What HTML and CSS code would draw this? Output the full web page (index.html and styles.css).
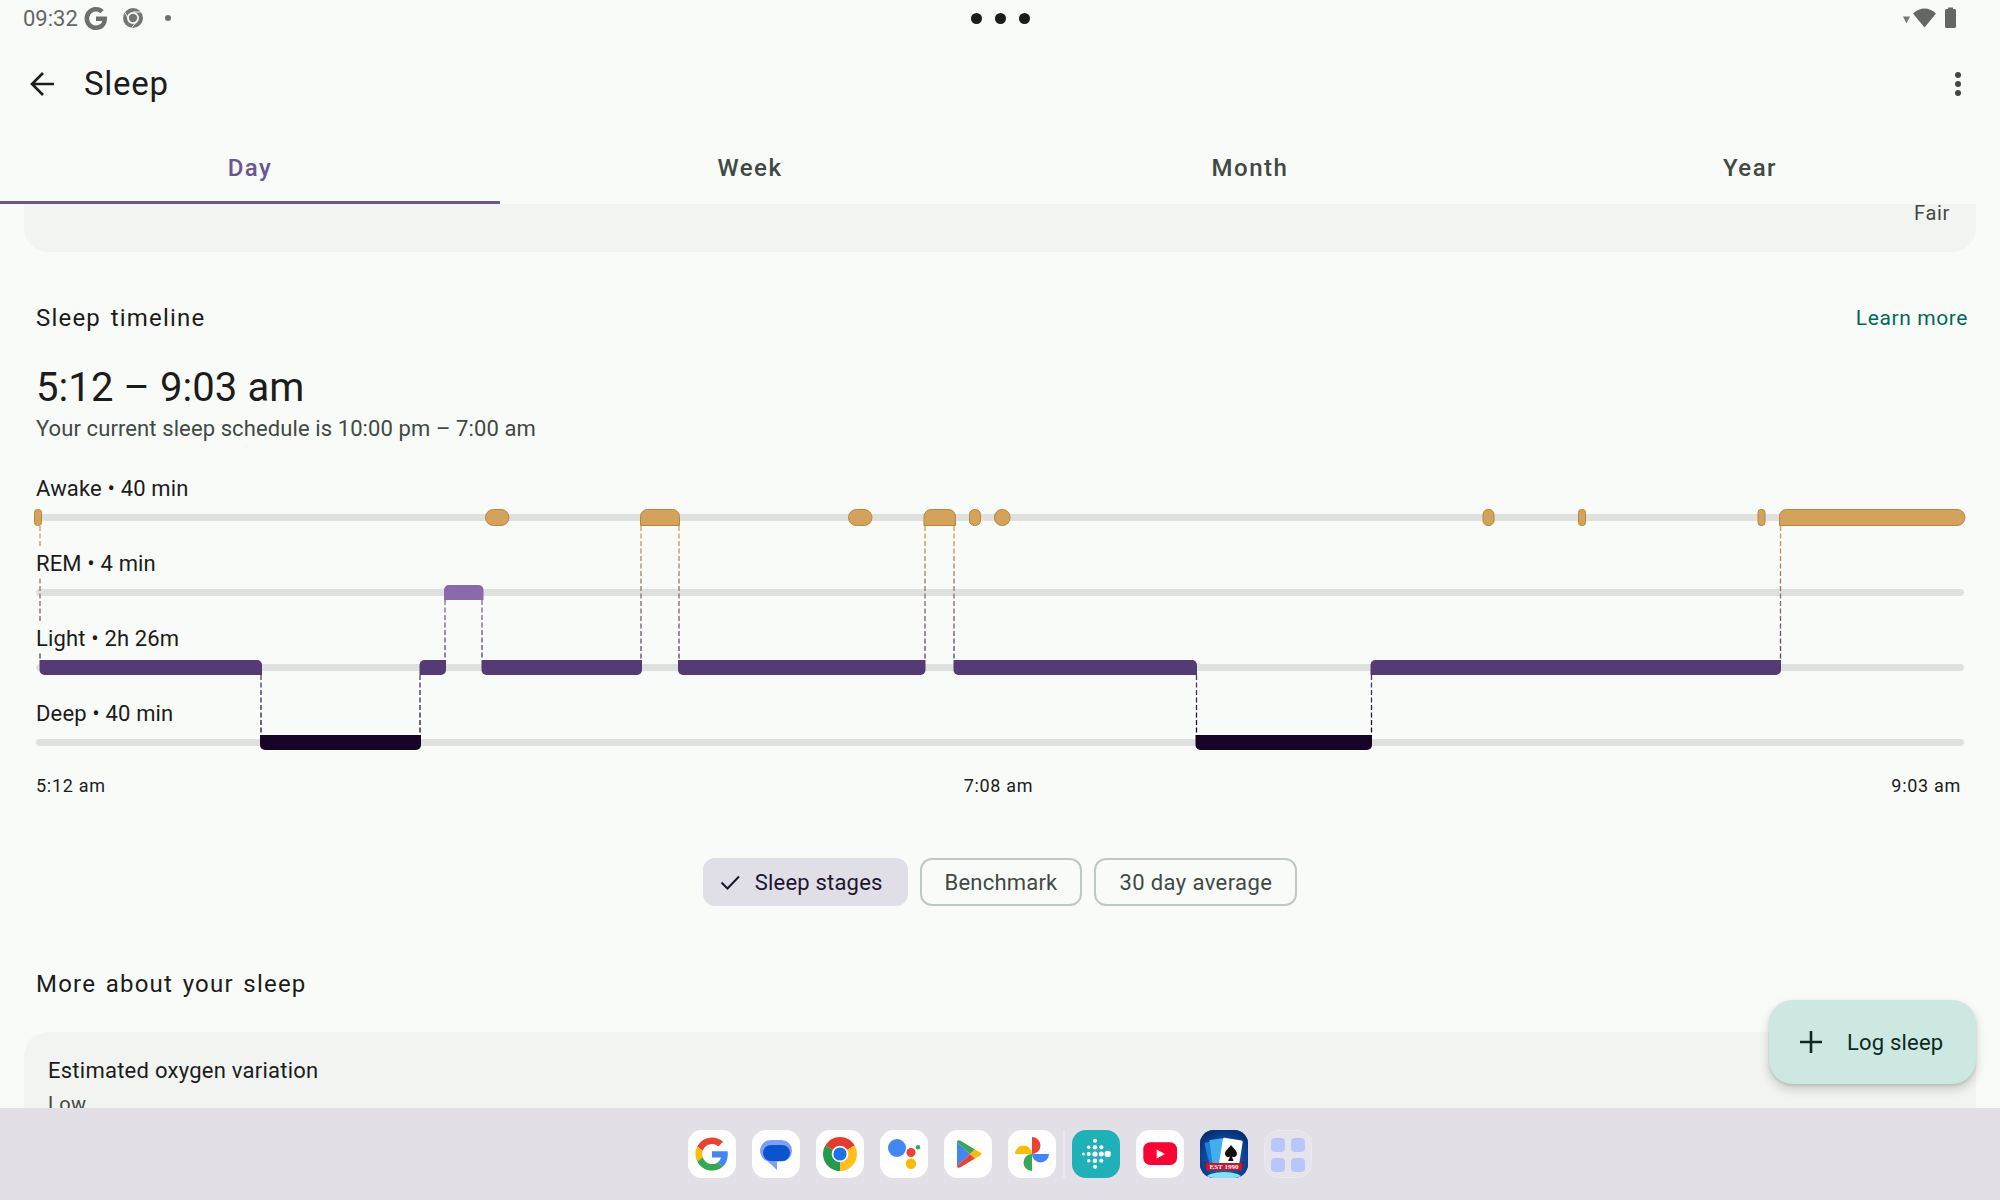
FILE: index.html
```html
<!DOCTYPE html>
<html lang="en">
<head>
<meta charset="utf-8">
<title>Sleep</title>
<link rel="stylesheet" href="styles.css">
</head>
<body>
<div class="screen">
  <div class="status">
    <div class="status-left">
      <span class="clock">09:32</span>
      <svg class="st-g" viewBox="0 0 48 48"><path d="M24 9.5c3.54 0 6.71 1.22 9.21 3.6l6.85-6.85C35.9 2.38 30.47 0 24 0 14.62 0 6.51 5.38 2.56 13.22l7.98 6.19C12.43 13.72 17.74 9.5 24 9.5zM46.98 24.55c0-1.57-.15-3.09-.38-4.55H24v9.02h12.94c-.58 2.96-2.26 5.48-4.78 7.18l7.73 6c4.51-4.18 7.09-10.36 7.09-17.65zM10.53 28.59c-.48-1.45-.76-2.99-.76-4.59s.27-3.14.76-4.59l-7.98-6.19C.92 16.46 0 20.12 0 24c0 3.88.92 7.54 2.56 10.78l7.97-6.19zM24 48c6.48 0 11.93-2.13 15.89-5.81l-7.73-6c-2.15 1.45-4.92 2.3-8.16 2.3-6.26 0-11.57-4.22-13.47-9.91l-7.98 6.19C6.51 42.62 14.62 48 24 48z"/></svg>
      <svg class="st-chrome" viewBox="0 0 20 20"><circle cx="10" cy="10" r="10" fill="#757575"/><circle cx="10" cy="10" r="6" fill="#f9fbf8"/><circle cx="10" cy="10" r="4.2" fill="#757575"/><path d="M10 4H19M6 12L2 4.5M14 12.5L9 19.5" stroke="#f9fbf8" stroke-width="1"/></svg>
      <span class="st-dot"></span>
    </div>
    <div class="status-center"><span></span><span></span><span></span></div>
    <div class="status-right">
      <svg class="st-icons" viewBox="0 0 56 22"><path d="M0 9.5H7L3.5 16.5Z" fill="#777"/><path d="M10 6.5Q21.500 -3.500 33 6.500L21.500 20.500Z" fill="#666"/><path d="M42 3.500a1.500 1.500 0 0 1 1.500 -1.500H45V0.500H50V2H51.500a1.500 1.500 0 0 1 1.500 1.500V19.500a1.500 1.500 0 0 1 -1.500 1.500H43.500a1.500 1.500 0 0 1 -1.500 -1.500Z" fill="#666"/></svg>
    </div>
  </div>

  <header class="topbar">
    <svg class="back" viewBox="0 0 36 36"><path d="M29 18H7M18 7L7 18L18 29" fill="none" stroke="#1b1c1b" stroke-width="2.600"/></svg>
    <h1 class="title">Sleep</h1>
    <svg class="more" viewBox="0 0 8 26"><circle cx="4" cy="4" r="3"/><circle cx="4" cy="13" r="3"/><circle cx="4" cy="22" r="3"/></svg>
  </header>

  <nav class="tabs">
    <div class="tab tab-active">Day</div>
    <div class="tab">Week</div>
    <div class="tab">Month</div>
    <div class="tab">Year</div>
  </nav>

  <main class="content">
    <div class="card-end"><span class="fair">Fair</span></div>

    <section class="timeline">
      <div class="sec-head">
        <h2 class="sec-title">Sleep timeline</h2>
        <a class="learn">Learn more</a>
      </div>
      <div class="range">5:12 – 9:03 am</div>
      <div class="schedule">Your current sleep schedule is 10:00 pm – 7:00 am</div>

      <div class="chart">
        <div class="row"><div class="row-label">Awake • 40 min</div><div class="track"></div></div>
        <div class="row"><div class="row-label">REM • 4 min</div><div class="track"></div></div>
        <div class="row"><div class="row-label">Light • 2h 26m</div><div class="track"></div></div>
        <div class="row"><div class="row-label">Deep • 40 min</div><div class="track"></div></div>

        <svg class="bars" viewBox="0 0 2000 300">
          <defs>
            <linearGradient id="gA" gradientUnits="userSpaceOnUse" x1="0" y1="52" x2="0" y2="187"><stop offset="0" stop-color="#d4a25a"/><stop offset="1" stop-color="#553b75"/></linearGradient>
            <linearGradient id="gR" gradientUnits="userSpaceOnUse" x1="0" y1="127" x2="0" y2="187"><stop offset="0" stop-color="#8a69aa"/><stop offset="1" stop-color="#553b75"/></linearGradient>
            <linearGradient id="gD" gradientUnits="userSpaceOnUse" x1="0" y1="202" x2="0" y2="262"><stop offset="0" stop-color="#553b75"/><stop offset="1" stop-color="#170528"/></linearGradient>
          </defs>
          <g class="dash dash-a">
            <path d="M40 53V187M641 53V187M679 53V187M925 53V187M954 53V187M1780.500 53V187"/>
          </g>
          <g class="dash dash-r"><path d="M445 127V187M482 127V187"/></g>
          <g class="dash dash-d"><path d="M261 202V262M420 202V262M1196.500 202V262M1371.500 202V262"/></g>

          <g class="awake">
            <rect x="34.500" y="36.500" width="7" height="16" rx="3"/>
            <rect x="485.500" y="36.500" width="23.500" height="16" rx="8"/>
            <path d="M640.500 52.500V43.500a7 7 0 0 1 7 -7H672.500a7 7 0 0 1 7 7V52.500Z"/>
            <rect x="848.500" y="36.500" width="23.500" height="16" rx="8"/>
            <path d="M924 52.500V43.500a7 7 0 0 1 7 -7H948.500a7 7 0 0 1 7 7V52.500Z"/>
            <rect x="969.500" y="36.500" width="11" height="16" rx="5"/>
            <rect x="994.500" y="36.500" width="15.500" height="16" rx="7.500"/>
            <rect x="1483" y="36.500" width="11" height="16" rx="5"/>
            <rect x="1578.500" y="36.500" width="7" height="16" rx="3"/>
            <rect x="1758" y="36.500" width="7" height="16" rx="3"/>
            <path d="M1779.500 52.500V43.500a7 7 0 0 1 7 -7H1957a8 8 0 0 1 0 16Z"/>
          </g>
          <path class="rem" d="M449 112H478.500a5 5 0 0 1 5 5V127H444V117a5 5 0 0 1 5 -5Z"/>
          <g class="light">
            <path d="M39.500 187H257a5 5 0 0 1 5 5V202H44.500a5 5 0 0 1 -5 -5Z"/>
            <path d="M424.500 187H446V197a5 5 0 0 1 -5 5H419.500V192a5 5 0 0 1 5 -5Z"/>
            <path d="M481.500 187H642V197a5 5 0 0 1 -5 5H486.500a5 5 0 0 1 -5 -5Z"/>
            <path d="M678 187H925.500V197a5 5 0 0 1 -5 5H683a5 5 0 0 1 -5 -5Z"/>
            <path d="M953.500 187H1192a5 5 0 0 1 5 5V202H958.500a5 5 0 0 1 -5 -5Z"/>
            <path d="M1375.500 187H1781V197a5 5 0 0 1 -5 5H1370.500V192a5 5 0 0 1 5 -5Z"/>
          </g>
          <g class="deep">
            <path d="M260 262H421V272a5 5 0 0 1 -5 5H265a5 5 0 0 1 -5 -5Z"/>
            <path d="M1195.500 262H1372V272a5 5 0 0 1 -5 5H1200.500a5 5 0 0 1 -5 -5Z"/>
          </g>
        </svg>
      </div>

      <div class="axis"><span>5:12 am</span><span>7:08 am</span><span>9:03 am</span></div>

      <div class="chips">
        <div class="chip chip-on">
          <svg class="check" viewBox="0 0 20 20"><path d="M1.500 10.500L7.500 16.500L19 4.500" fill="none" stroke="#1d1530" stroke-width="2"/></svg>
          <span>Sleep stages</span>
        </div>
        <div class="chip">Benchmark</div>
        <div class="chip chip-wide">30 day average</div>
      </div>
    </section>

    <h2 class="sec-title more-title">More about your sleep</h2>
    <div class="card-next">
      <div class="card-title">Estimated oxygen variation</div>
      <div class="card-value">Low</div>
    </div>

    <button class="fab">
      <svg class="plus" viewBox="0 0 22 22"><path d="M11 0V22M0 11H22" stroke="#0c2a24" stroke-width="2.600"/></svg>
      <span>Log sleep</span>
    </button>
  </main>

  <footer class="dock">
    <div class="app"><svg viewBox="0 0 48 48"><g transform="translate(7.500 7.500) scale(.6875)"><path fill="#EA4335" d="M24 9.500c3.540 0 6.710 1.220 9.210 3.600l6.850-6.850C35.900 2.380 30.470 0 24 0 14.620 0 6.510 5.380 2.560 13.220l7.980 6.190C12.430 13.720 17.740 9.500 24 9.500z"/><path fill="#4285F4" d="M46.980 24.550c0-1.570-.150-3.090-.380-4.550H24v9.020h12.940c-.580 2.960-2.260 5.480-4.780 7.180l7.730 6c4.510-4.180 7.090-10.360 7.090-17.650z"/><path fill="#FBBC05" d="M10.530 28.590c-.480-1.450-.760-2.990-.760-4.590s.270-3.140.760-4.590l-7.980-6.190C.920 16.460 0 20.120 0 24c0 3.880.920 7.540 2.560 10.780l7.970-6.190z"/><path fill="#34A853" d="M24 48c6.480 0 11.930-2.130 15.890-5.810l-7.730-6c-2.150 1.450-4.920 2.300-8.160 2.300-6.260 0-11.570-4.220-13.470-9.910l-7.980 6.190C6.510 42.620 14.620 48 24 48z"/></g></svg></div>
    <div class="app"><svg viewBox="0 0 48 48"><path fill="#7d9ffa" d="M19 10H30a10.500 10.500 0 0 1 10 11a10.500 10.500 0 0 1 -10.500 10.500H25V40L16 31.500A11 11 0 0 1 8 21A11 11 0 0 1 19 10Z"/><rect x="11" y="15" width="27" height="16" rx="8" fill="#0a55cd"/></svg></div>
    <div class="app"><svg viewBox="0 0 48 48"><path fill="#e53a2e" d="M24 24L9.300 15.500A17 17 0 0 1 38.700 15.500Z"/><path fill="#ffc01e" d="M24 24L38.700 15.500A17 17 0 0 1 24 41Z"/><path fill="#259a4b" d="M24 24L24 41A17 17 0 0 1 9.300 15.500Z"/><circle cx="24" cy="24" r="8.300" fill="#fff"/><circle cx="24" cy="24" r="6.600" fill="#1a73e8"/></svg></div>
    <div class="app"><svg viewBox="0 0 48 48"><circle cx="17" cy="18" r="9" fill="#4285f4"/><circle cx="31" cy="22.500" r="4.500" fill="#ea4335"/><circle cx="31" cy="33.700" r="5.200" fill="#fbbc05"/><circle cx="38" cy="17.300" r="2.200" fill="#34a853"/></svg></div>
    <div class="app"><svg viewBox="0 0 48 48"><path fill="#4285f4" d="M13 12V36L26 24Z"/><path fill="#34a853" d="M13.500 10.500Q15 9.800 17 11L31 19.500L26 24L13 12Q13 11 13.500 10.500Z"/><path fill="#ea4335" d="M13.500 37.500Q15 38.200 17 37L31 28.500L26 24L13 36Q13 37 13.500 37.500Z"/><path fill="#fbbc05" d="M31 19.500L36.800 22.800Q38.500 24 36.800 25.200L31 28.500L26 24Z"/></svg></div>
    <div class="app"><svg viewBox="0 0 48 48"><path fill="#ea4335" d="M24 7A8.500 8.500 0 0 1 24 24Z"/><path fill="#4285f4" d="M41 24A8.500 8.500 0 0 1 24 24Z"/><path fill="#34a853" d="M24 41A8.500 8.500 0 0 1 24 24Z"/><path fill="#fbbc05" d="M7 24A8.500 8.500 0 0 1 24 24Z"/></svg></div>
    <div class="divider"></div>
    <div class="app app-fitbit"><svg viewBox="0 0 48 48"><g fill="#fff"><circle cx="23" cy="10.700" r="2"/><circle cx="23" cy="17.300" r="2.300"/><circle cx="23" cy="24" r="2.600"/><circle cx="23" cy="30.700" r="2.300"/><circle cx="23" cy="36.700" r="2"/><circle cx="16.700" cy="17.300" r="1.800"/><circle cx="16.700" cy="24" r="2"/><circle cx="16.700" cy="30.700" r="1.800"/><circle cx="11.300" cy="24" r="1.500"/><circle cx="29.300" cy="17.300" r="2.100"/><circle cx="29.300" cy="24" r="2.500"/><circle cx="29.300" cy="30.700" r="2.100"/><circle cx="35.700" cy="24" r="3.200"/></g></svg></div>
    <div class="app"><svg viewBox="0 0 48 48"><rect x="7.300" y="12.300" width="33.700" height="22.700" rx="7" fill="#ff0033"/><path d="M20.700 19.500L29 24L20.700 28.500Z" fill="#fff"/></svg></div>
    <div class="app app-sol"><svg viewBox="0 0 48 48">
      <defs><radialGradient id="solBg" cx=".5" cy=".62" r=".7"><stop offset="0" stop-color="#1a6fd0"/><stop offset=".7" stop-color="#0a3f92"/><stop offset="1" stop-color="#062a66"/></radialGradient></defs>
      <rect width="48" height="48" fill="url(#solBg)"/>
      <ellipse cx="24" cy="48" rx="18" ry="6" fill="#7fe2f5"/>
      <rect x="7" y="11" width="14" height="24" rx="1" fill="#1f7fd6" transform="rotate(-14 14 23)"/>
      <rect x="11" y="9" width="14" height="26" rx="1" fill="#3fb0ea" transform="rotate(-8 18 22)"/>
      <rect x="21" y="9" width="20" height="27" rx="1.500" fill="#fff" transform="rotate(9 31 22)"/>
      <path d="M31 15C34 19 37 20.500 37 24A3.300 3.300 0 0 1 32 26.500L33.500 31H28L30 26.500A3.300 3.300 0 0 1 25 24C25 20.500 28 19 31 15Z" fill="#111"/>
      <path d="M3 32L9 33V40L5 39L6 36Z" fill="#8f0f1d"/><path d="M45 32L39 33V40L43 39L42 36Z" fill="#8f0f1d"/>
      <rect x="6" y="33" width="36" height="7.500" fill="#c8162a"/>
      <text class="sol-text" x="24" y="39">EST 1990</text>
    </svg></div>
    <div class="app app-all"><span></span><span></span><span></span><span></span></div>
  </footer>
</div>
</body>
</html>
```

FILE: styles.css
```css
* { box-sizing: border-box; }
html, body { margin: 0; padding: 0; }
body { width: 2000px; height: 1200px; overflow: hidden; background: #f9fbf8; font-family: Roboto, "Liberation Sans", sans-serif; color: #1b1c1b; }
.screen { width: 2000px; height: 1200px; display: flex; flex-direction: column; }

.status { height: 36px; display: grid; grid-template-columns: 1fr auto 1fr; align-items: center; }
.status-left { display: flex; align-items: center; padding-left: 23px; }
.clock { font-size: 22px; color: #666; width: 61px; }
.st-g { width: 24px; height: 23px; fill: #6f6f6f; }
.st-chrome { width: 20px; height: 20px; margin-left: 15px; }
.st-dot { width: 6px; height: 6px; border-radius: 50%; background: #6f6f6f; margin-left: 22px; }
.status-center { display: flex; gap: 13px; }
.status-center span { width: 11px; height: 11px; border-radius: 50%; background: #1b1b1b; }
.status-right { display: flex; justify-content: flex-end; padding-right: 41px; }
.st-icons { width: 56px; height: 22px; }

.topbar { height: 96px; display: flex; align-items: center; padding: 0 38px 0 25px; }
.back { width: 36px; height: 36px; }
.title { margin: 0 0 2px 23px; font-size: 33px; font-weight: 400; flex: 1; letter-spacing: .7px; }
.more { width: 8px; height: 26px; fill: #404944; }

.tabs { height: 72px; display: flex; }
.tab { flex: 1; display: flex; align-items: center; justify-content: center; font-size: 24px; font-weight: 470; color: #404944; letter-spacing: 1.500px; }
.tab-active { color: #6b5594; border-bottom: 3px solid #6b5594; padding-top: 3px; }

.content { flex: 1; min-height: 0; overflow: hidden; position: relative; }
.card-end { height: 48px; margin: 0 24px; background: #f2f4f2; border-radius: 0 0 24px 24px; display: flex; justify-content: flex-end; padding-right: 26px; }
.fair { font-size: 20px; line-height: 18px; color: #404944; letter-spacing: .7px; }

.timeline { padding-top: 48px; }
.sec-head { display: flex; justify-content: space-between; align-items: center; height: 36px; padding: 0 32px 0 36px; }
.sec-title { margin: 0; font-size: 24px; font-weight: 450; line-height: 36px; letter-spacing: 1.200px; word-spacing: 2.500px; }
.learn { font-size: 21px; font-weight: 450; color: #006a5b; letter-spacing: .6px; }
.range { margin: 27px 0 0 36px; font-size: 40px; line-height: 50px; letter-spacing: .1px; }
.schedule { margin: 1px 0 0 36px; padding-top: 1px; height: 28px; font-size: 22px; line-height: 28px; color: #404944; letter-spacing: .1px; }

.chart { position: relative; margin-top: 31px; height: 300px; padding: 0 36px; }
.row { height: 75px; }
.row-label { position: relative; z-index: 1; width: fit-content; height: 30px; line-height: 32px; font-size: 22px; letter-spacing: .15px; background: #f9fbf8; }
.track { height: 7px; margin-top: 11px; border-radius: 4px; background: #dfe1de; }
.bars { position: absolute; left: 0; top: 0; width: 2000px; height: 300px; }
.dash path { fill: none; stroke-width: 1.300; stroke-dasharray: 5 2.500; }
.dash-a path { stroke: url(#gA); }
.dash-r path { stroke: url(#gR); }
.dash-d path { stroke: url(#gD); }
.awake { fill: #d4a25a; stroke: #b5883f; stroke-width: 1; }
.rem { fill: #8a69aa; }
.light { fill: #553b75; }
.deep { fill: #170528; }

.axis { display: flex; justify-content: space-between; height: 24px; line-height: 26px; padding: 0 39px 0 36px; font-size: 18px; letter-spacing: .7px; }

.chips { display: flex; justify-content: center; gap: 12px; margin-top: 61px; }
.chip { height: 48px; display: flex; align-items: center; padding: 0 23px; border: 2px solid #bfc9c3; border-radius: 12px; font-size: 22px; letter-spacing: .2px; color: #404944; }
.chip-on { background: #e0dee6; border-color: #e0dee6; color: #1d1530; padding: 0 23px 0 15px; gap: 15px; }
.chip-wide { letter-spacing: .4px; }
.check { width: 20px; height: 20px; }

.more-title { margin: 60px 0 0 36px; }
.card-next { position: absolute; left: 24px; right: 24px; top: 828px; height: 120px; padding: 25px 24px; background: #f2f4f2; border-radius: 24px; }
.card-title { font-size: 22px; line-height: 28px; font-weight: 450; letter-spacing: .25px; }
.card-value { margin-top: 5px; font-size: 20px; line-height: 28px; color: #404944; letter-spacing: .4px; }

.fab { position: absolute; left: 1769px; top: 796px; width: 207px; height: 84px; border: 0; border-radius: 24px; background: #cde8e1; color: #0c2a24; box-shadow: 0 5px 9px 2px rgba(0,0,0,.12), 0 2px 3px rgba(0,0,0,.12); display: flex; align-items: center; padding: 0 0 0 31px; gap: 25px; font: 400 22px Roboto, sans-serif; letter-spacing: .2px; }
.plus { width: 22px; height: 22px; }

.dock { height: 92px; background: #e2e0e6; display: flex; justify-content: center; gap: 16px; padding-top: 22px; position: relative; }
.app { width: 48px; height: 48px; background: #fff; border-radius: 14px; overflow: hidden; }
.app svg { display: block; width: 48px; height: 48px; }
.app-fitbit { background: #1eb1b8; }
.app-sol { background: #0a3f92; }
.sol-text { font: 700 7px "Liberation Serif", serif; fill: #fff; text-anchor: middle; }
.app-all { background: #e6e4ea; border: 1px solid #eceaf0; display: grid; grid-template-columns: 14px 14px; grid-auto-rows: 14px; gap: 6px; padding: 7px 6px; }
.app-all span { background: #b9c6fb; border-radius: 4px; }
.divider { width: 2px; height: 48px; margin: 0 -9px; background: #ebe9ee; }
```
